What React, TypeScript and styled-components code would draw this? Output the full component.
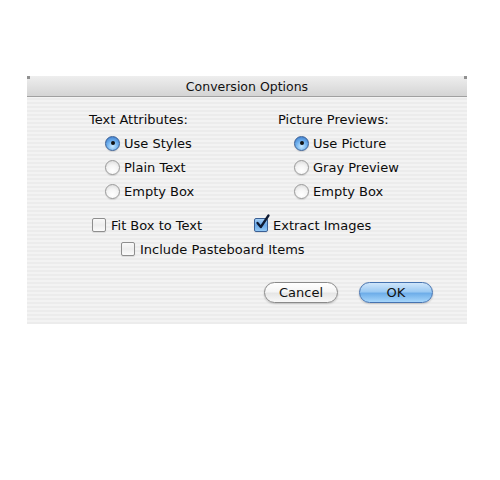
import React from "react";
import styled, { createGlobalStyle } from "styled-components";

const Global = createGlobalStyle`
  html, body { margin: 0; padding: 0; background: #ffffff; }
  body { font-family: "DejaVu Sans", "Liberation Sans", sans-serif; }
`;

const Page = styled.div`
  width: 500px;
  height: 480px;
  padding: 76px 0 0 27px;
  box-sizing: border-box;
`;

const Dialog = styled.div`
  width: 440px;
  height: 248px;
  display: flex;
  flex-direction: column;
  background: repeating-linear-gradient(
    to bottom,
    #f3f3f3 0px,
    #f3f3f3 2px,
    #ececec 2px,
    #ececec 4px
  );
  position: relative;
`;

const TitleBar = styled.div`
  height: 20px;
  border-bottom: 1px solid #a0a0a0;
  background: linear-gradient(to bottom, #eeeeee 0%, #e0e0e0 55%, #d4d4d4 100%);
  display: flex;
  align-items: center;
  justify-content: center;
  font-size: 12.5px;
  color: #111;
  position: relative;
`;

const Corner = styled.span<{ $side: "left" | "right" }>`
  position: absolute;
  top: 0;
  ${(p) => (p.$side === "left" ? "left: 0;" : "right: 0;")}
  width: 3px;
  height: 3px;
  background: #6a6a6a;
  opacity: 0.7;
`;

const Body = styled.div`
  display: flex;
  flex-direction: column;
  padding-top: 11px;
  font-size: 13px;
  color: #0c0c0c;
`;

const Columns = styled.div`
  display: grid;
  grid-template-columns: 189px 160px;
  padding-left: 62px;
`;

const Group = styled.div`
  display: flex;
  flex-direction: column;
`;

const Label = styled.div`
  height: 23px;
  display: flex;
  align-items: center;
`;

const Option = styled.div`
  height: 24px;
  display: flex;
  align-items: center;
  gap: 4px;
  padding-left: 16px;
`;

const RadioDot = styled.span<{ $on?: boolean }>`
  width: 15px;
  height: 15px;
  border-radius: 50%;
  box-sizing: border-box;
  flex: none;
  display: flex;
  align-items: center;
  justify-content: center;
  border: 1px solid ${(p) => (p.$on ? "#3a5f94" : "#999999")};
  background: ${(p) =>
    p.$on
      ? "radial-gradient(circle at 50% 72%, #c8e8ff 0%, #74b4ef 45%, #2f6fc4 100%)"
      : "radial-gradient(circle at 50% 75%, #ffffff 0%, #f4f4f4 50%, #d4d4d4 100%)"};
  box-shadow: 0 1px 1px rgba(0, 0, 0, 0.12);
  &::after {
    content: "";
    display: ${(p) => (p.$on ? "block" : "none")};
    width: 4px;
    height: 4px;
    border-radius: 50%;
    background: #111;
  }
`;

const Box = styled.span<{ $on?: boolean }>`
  width: 14px;
  height: 14px;
  border-radius: 2px;
  box-sizing: border-box;
  flex: none;
  position: relative;
  border: 1px solid ${(p) => (p.$on ? "#3a5f94" : "#8e8e8e")};
  background: ${(p) =>
    p.$on
      ? "linear-gradient(to bottom, #a6d0f6 0%, #6aa8e8 50%, #92c8f5 100%)"
      : "linear-gradient(to bottom, #f9f9f9 0%, #ededed 50%, #fbfbfb 100%)"};
  box-shadow: 0 1px 1px rgba(0, 0, 0, 0.1);
`;

const Check = styled.svg`
  position: absolute;
  left: 0px;
  top: -5px;
  width: 15px;
  height: 16px;
  overflow: visible;
`;

const CheckRow = styled.div`
  display: flex;
  padding-left: 65px;
  height: 24px;
  margin-top: 10px;
`;

const CheckItem = styled.div<{ $width?: number }>`
  display: flex;
  align-items: center;
  gap: 5px;
  ${(p) => (p.$width ? `width: ${p.$width}px;` : "")}
`;

const SubRow = styled.div`
  display: flex;
  align-items: center;
  gap: 5px;
  padding-left: 94px;
  height: 24px;
`;

const Buttons = styled.div`
  display: flex;
  justify-content: flex-end;
  gap: 21px;
  padding-right: 34px;
  margin-top: 21px;
`;

const Button = styled.button<{ $primary?: boolean }>`
  width: 74px;
  height: 21px;
  border-radius: 11px;
  font-family: inherit;
  font-size: 13px;
  color: #111;
  padding: 0;
  box-sizing: border-box;
  border: 1px solid ${(p) => (p.$primary ? "#4673b0" : "#8a8a8a")};
  background: ${(p) =>
    p.$primary
      ? "linear-gradient(to bottom, #cfe6fb 0%, #9ccaf3 45%, #6faee9 55%, #a6d6fb 100%)"
      : "linear-gradient(to bottom, #ffffff 0%, #f5f5f5 45%, #e6e6e6 55%, #f8f8f8 100%)"};
  box-shadow: 0 1px 2px rgba(0, 0, 0, 0.2);
`;

const Radio = ({ on, label }: { on?: boolean; label: string }) => (
  <Option>
    <RadioDot $on={on} />
    <span>{label}</span>
  </Option>
);

const CheckBox = ({ on }: { on?: boolean }) => (
  <Box $on={on}>
    {on && (
      <Check viewBox="0 0 15 16">
        <path
          d="M2.5 9 L5.8 13 L13.5 1.5"
          fill="none"
          stroke="#0d1a33"
          strokeWidth="2.3"
          strokeLinecap="round"
          strokeLinejoin="round"
        />
      </Check>
    )}
  </Box>
);

export default function App() {
  return (
    <>
      <Global />
      <Page>
        <Dialog>
          <TitleBar>
            <Corner $side="left" />
            Conversion Options
            <Corner $side="right" />
          </TitleBar>
          <Body>
            <Columns>
              <Group>
                <Label>Text Attributes:</Label>
                <Radio on label="Use Styles" />
                <Radio label="Plain Text" />
                <Radio label="Empty Box" />
              </Group>
              <Group>
                <Label>Picture Previews:</Label>
                <Radio on label="Use Picture" />
                <Radio label="Gray Preview" />
                <Radio label="Empty Box" />
              </Group>
            </Columns>
            <CheckRow>
              <CheckItem $width={162}>
                <CheckBox />
                <span>Fit Box to Text</span>
              </CheckItem>
              <CheckItem>
                <CheckBox on />
                <span>Extract Images</span>
              </CheckItem>
            </CheckRow>
            <SubRow>
              <CheckBox />
              <span>Include Pasteboard Items</span>
            </SubRow>
            <Buttons>
              <Button>Cancel</Button>
              <Button $primary>OK</Button>
            </Buttons>
          </Body>
        </Dialog>
      </Page>
    </>
  );
}
